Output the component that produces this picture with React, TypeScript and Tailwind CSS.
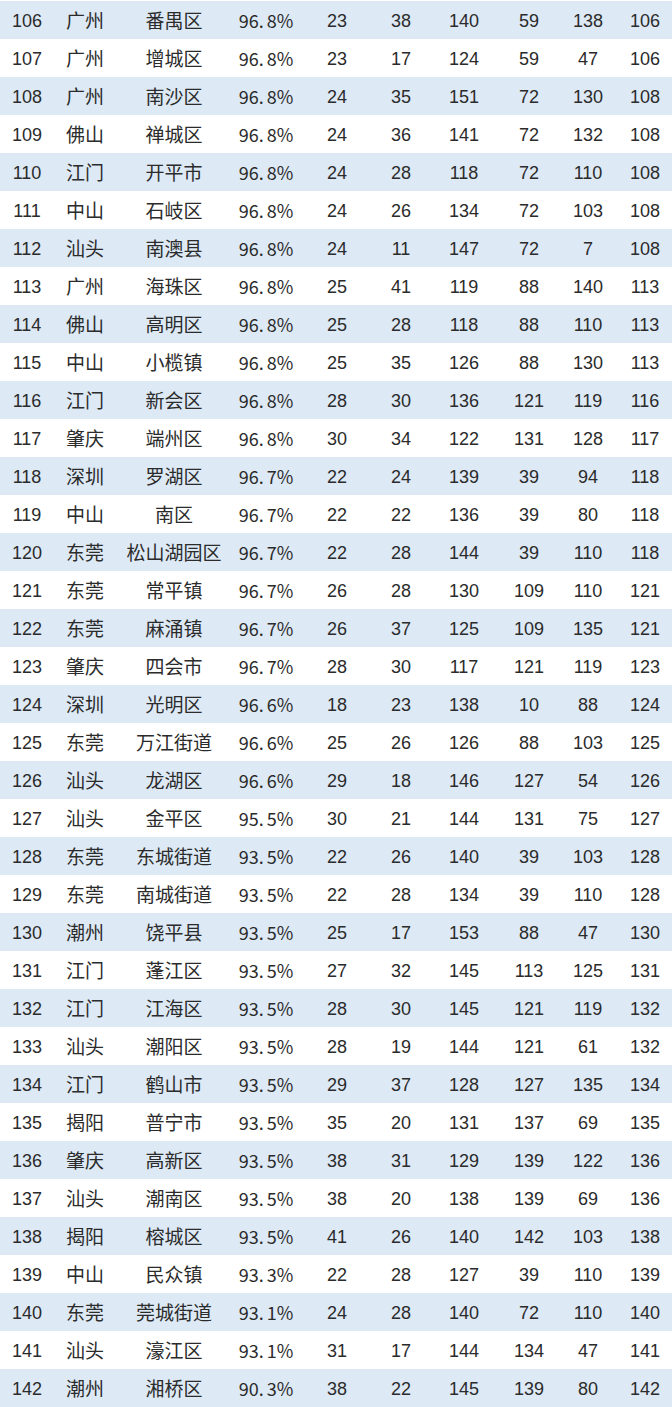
const raw = `106 广州 番禺区 96.8% 23 38 140 59 138 106
107 广州 增城区 96.8% 23 17 124 59 47 106
108 广州 南沙区 96.8% 24 35 151 72 130 108
109 佛山 禅城区 96.8% 24 36 141 72 132 108
110 江门 开平市 96.8% 24 28 118 72 110 108
111 中山 石岐区 96.8% 24 26 134 72 103 108
112 汕头 南澳县 96.8% 24 11 147 72 7 108
113 广州 海珠区 96.8% 25 41 119 88 140 113
114 佛山 高明区 96.8% 25 28 118 88 110 113
115 中山 小榄镇 96.8% 25 35 126 88 130 113
116 江门 新会区 96.8% 28 30 136 121 119 116
117 肇庆 端州区 96.8% 30 34 122 131 128 117
118 深圳 罗湖区 96.7% 22 24 139 39 94 118
119 中山 南区 96.7% 22 22 136 39 80 118
120 东莞 松山湖园区 96.7% 22 28 144 39 110 118
121 东莞 常平镇 96.7% 26 28 130 109 110 121
122 东莞 麻涌镇 96.7% 26 37 125 109 135 121
123 肇庆 四会市 96.7% 28 30 117 121 119 123
124 深圳 光明区 96.6% 18 23 138 10 88 124
125 东莞 万江街道 96.6% 25 26 126 88 103 125
126 汕头 龙湖区 96.6% 29 18 146 127 54 126
127 汕头 金平区 95.5% 30 21 144 131 75 127
128 东莞 东城街道 93.5% 22 26 140 39 103 128
129 东莞 南城街道 93.5% 22 28 134 39 110 128
130 潮州 饶平县 93.5% 25 17 153 88 47 130
131 江门 蓬江区 93.5% 27 32 145 113 125 131
132 江门 江海区 93.5% 28 30 145 121 119 132
133 汕头 潮阳区 93.5% 28 19 144 121 61 132
134 江门 鹤山市 93.5% 29 37 128 127 135 134
135 揭阳 普宁市 93.5% 35 20 131 137 69 135
136 肇庆 高新区 93.5% 38 31 129 139 122 136
137 汕头 潮南区 93.5% 38 20 138 139 69 136
138 揭阳 榕城区 93.5% 41 26 140 142 103 138
139 中山 民众镇 93.3% 22 28 127 39 110 139
140 东莞 莞城街道 93.1% 24 28 140 72 110 140
141 汕头 濠江区 93.1% 31 17 144 134 47 141
142 潮州 湘桥区 90.3% 38 22 145 139 80 142`;

const rows = raw.split("\n").map((l) => l.trim().split(/\s+/));

// CJK glyphs sit a little low with leading-none, nudge them up to line up with the digits
const cjk = "font-['Noto_Sans_CJK_SC',sans-serif] text-[19px] leading-none -translate-y-[2px]";
const num = "font-['Liberation_Sans','Noto_Sans_CJK_SC',sans-serif] text-[18px] leading-none";

export default function App() {
  return (
    <div className="w-[672px] bg-white pt-px text-[#2b2b2b]">
      {rows.map((r, i) => {
        const [whole, frac] = r[3].split(".");
        return (
          <div
            key={r[0]}
            className={`grid h-[38px] grid-cols-[54px_62px_116px_68px_74px_54px_72px_58px_60px_54px] items-center pt-[2px] text-center ${
              i % 2 === 0 ? "bg-[#dde9f5]" : "bg-white"
            }`}
          >
            <span className={num}>{r[0]}</span>
            <span className={cjk}>{r[1]}</span>
            <span className={`${cjk} whitespace-nowrap`}>{r[2]}</span>
            <span className="font-['Noto_Sans_CJK_SC',sans-serif] text-[18px] leading-none whitespace-nowrap -translate-y-px">
              {whole}.<span className="ml-[3px]">{frac}</span>
            </span>
            <span className={num}>{r[4]}</span>
            <span className={num}>{r[5]}</span>
            <span className={num}>{r[6]}</span>
            <span className={num}>{r[7]}</span>
            <span className={num}>{r[8]}</span>
            <span className={num}>{r[9]}</span>
          </div>
        );
      })}
    </div>
  );
}
